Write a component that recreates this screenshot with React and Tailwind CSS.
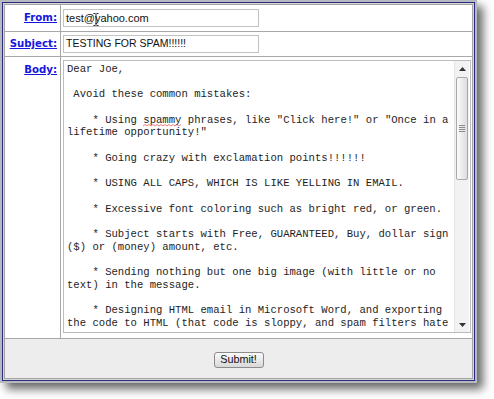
import React from "react";

const lines = [
  "Dear Joe,",
  "",
  " Avoid these common mistakes:",
  "",
  "SPAMMY",
  "lifetime opportunity!\"",
  "",
  "    * Going crazy with exclamation points!!!!!!",
  "",
  "    * USING ALL CAPS, WHICH IS LIKE YELLING IN EMAIL.",
  "",
  "    * Excessive font coloring such as bright red, or green.",
  "",
  "    * Subject starts with Free, GUARANTEED, Buy, dollar sign",
  "($) or (money) amount, etc.",
  "",
  "    * Sending nothing but one big image (with little or no",
  "text) in the message.",
  "",
  "    * Designing HTML email in Microsoft Word, and exporting",
  "the code to HTML (that code is sloppy, and spam filters hate",
];

function Label({ children }) {
  return (
    <span className="font-['DejaVu_Sans',sans-serif] font-bold text-[10.2px] leading-[12px] text-[#1515e0] underline underline-offset-[1px]">
      {children}
    </span>
  );
}

export default function App() {
  return (
    <div className="w-[494px] h-[399px] bg-white">
      <div className="w-[477px] h-[383px] border-2 border-[#b7b9c0] bg-white shadow-[6px_6px_9px_rgba(0,0,0,0.6)]">
        <div className="h-full border border-[#2c2c7e]">
          <div className="h-full border border-[#d6d6d6]">
            <div className="h-full border border-[#a4a4a4] flex flex-col bg-white">
              {/* From row */}
              <div className="h-[27px] flex border-b border-[#a8a8a8]">
                <div className="w-[56px] border-r border-[#a8a8a8] flex items-center justify-end pr-[3px]">
                  <Label>From:</Label>
                </div>
                <div className="flex-1 flex items-center pl-[2px] relative">
                  <div className="w-[196px] h-[18px] border border-[#c2c2c2] flex items-center pl-[2px] font-['Liberation_Sans',sans-serif] text-[11px] text-[#111]">
                    test@yahoo.com
                  </div>
                  <svg className="absolute left-[32px] top-[8px]" width="6" height="13" viewBox="0 0 6 13">
                    <path d="M0.5 0.5 H2.5 M3.5 0.5 H5.5 M3 1 V12 M0.5 12.5 H2.5 M3.5 12.5 H5.5" stroke="#222" strokeWidth="1" fill="none" />
                  </svg>
                </div>
              </div>
              {/* Subject row */}
              <div className="h-[25px] flex border-b border-[#a8a8a8]">
                <div className="w-[56px] border-r border-[#a8a8a8] flex items-center justify-end pr-[3px]">
                  <Label>Subject:</Label>
                </div>
                <div className="flex-1 flex items-center pl-[2px]">
                  <div className="w-[196px] h-[18px] border border-[#c2c2c2] flex items-center pl-[2px] font-['Liberation_Sans',sans-serif] text-[10.5px] text-[#111]">
                    TESTING FOR SPAM!!!!!!
                  </div>
                </div>
              </div>
              {/* Body row */}
              <div className="h-[282px] flex border-b border-[#a8a8a8]">
                <div className="w-[56px] border-r border-[#a8a8a8] flex items-start justify-end pr-[3px] pt-[7px]">
                  <Label>Body:</Label>
                </div>
                <div className="flex-1 pl-[2px] pt-[3px]">
                  <div className="w-[408px] h-[273px] border border-[#bcbcbc] flex overflow-hidden">
                    <div className="flex-1 pl-[3px] pt-[2px] overflow-hidden font-['Liberation_Mono',monospace] text-[10.6px] leading-[12.7px] text-[#1e1e1e] whitespace-pre">
                      {lines.map((l, i) =>
                        l === "SPAMMY" ? (
                          <div key={i} className="h-[12.7px]">
                            {"    * Using "}
                            <span className="relative inline-block">
                              spammy
                              <svg className="absolute left-0 top-[10px]" width="38" height="3" viewBox="0 0 38 3">
                                <path d="M0 2 L2 0.5 L4 2 L6 0.5 L8 2 L10 0.5 L12 2 L14 0.5 L16 2 L18 0.5 L20 2 L22 0.5 L24 2 L26 0.5 L28 2 L30 0.5 L32 2 L34 0.5 L36 2 L38 0.5" stroke="#e05a5a" strokeWidth="0.8" fill="none" />
                              </svg>
                            </span>
                            {' phrases, like "Click here!" or "Once in a'}
                          </div>
                        ) : (
                          <div key={i} className="h-[12.7px]">{l}</div>
                        )
                      )}
                    </div>
                    <div className="w-[15px] mr-[1px] bg-[#f2f2f2] border-l border-[#e6e6e6] flex flex-col items-center">
                      <div className="h-[15px] w-full flex items-center justify-center">
                        <svg width="7" height="4" viewBox="0 0 7 4">
                          <path d="M3.5 0 L7 4 L0 4 Z" fill="#333" />
                        </svg>
                      </div>
                      <div className="mt-[1px] w-[12px] h-[103px] rounded-[2px] border border-[#a9a9a9] bg-gradient-to-r from-[#fbfbfb] to-[#dcdcdc] flex flex-col items-center justify-center gap-[1px]">
                        <div className="w-[6px] h-[1px] bg-[#8a8a8a]" />
                        <div className="w-[6px] h-[1px] bg-[#8a8a8a]" />
                        <div className="w-[6px] h-[1px] bg-[#8a8a8a]" />
                        <div className="w-[6px] h-[1px] bg-[#8a8a8a]" />
                      </div>
                      <div className="flex-1" />
                      <div className="h-[15px] w-full flex items-center justify-center">
                        <svg width="7" height="4" viewBox="0 0 7 4">
                          <path d="M0 0 L7 0 L3.5 4 Z" fill="#333" />
                        </svg>
                      </div>
                    </div>
                  </div>
                </div>
              </div>
              {/* Submit row */}
              <div className="flex-1 bg-[#ededed] flex items-center justify-center pt-[2px]">
                <div className="w-[50px] h-[16px] rounded-[3px] border border-[#8c8c8c] bg-gradient-to-b from-[#fafafa] to-[#d9d9d9] flex items-center justify-center font-['Liberation_Sans',sans-serif] text-[10.8px] text-[#111]">
                  Submit!
                </div>
              </div>
            </div>
          </div>
        </div>
      </div>
    </div>
  );
}
